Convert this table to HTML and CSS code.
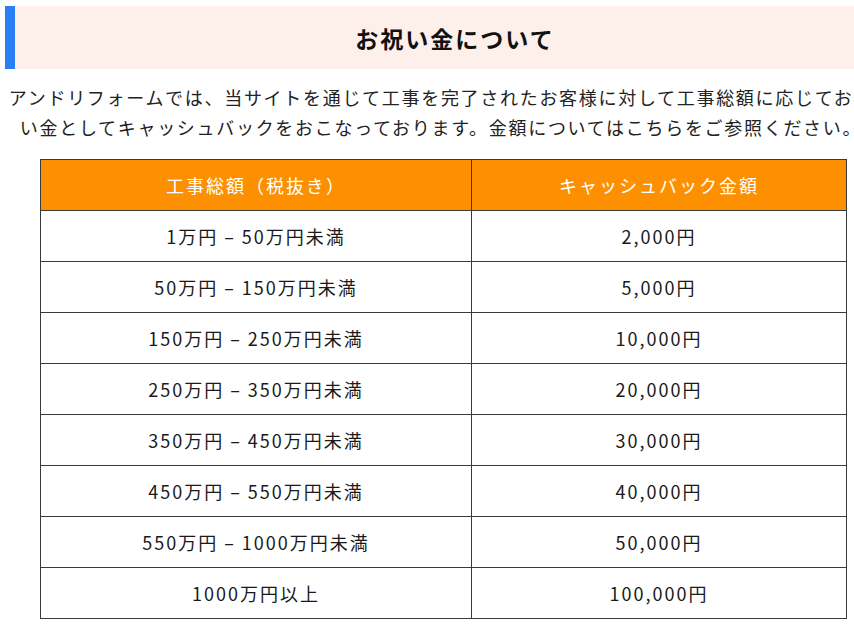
FILE: index.html
```html
<!DOCTYPE html>
<html lang="ja">
<head>
<meta charset="utf-8">
<title>お祝い金について</title>
<link rel="stylesheet" href="styles.css">
</head>
<body>
<div class="page">
  <h2 class="section-title">お祝い金について</h2>
  <p class="intro">アンドリフォームでは、当サイトを通じて工事を完了されたお客様に対して工事総額に応じてお祝い金としてキャッシュバックをおこなっております。金額についてはこちらをご参照ください。</p>
  <table class="cashback">
    <thead>
      <tr><th class="col-a">工事総額（税抜き）</th><th class="col-b">キャッシュバック金額</th></tr>
    </thead>
    <tbody>
      <tr><td>1万円 – 50万円未満</td><td>2,000円</td></tr>
      <tr><td>50万円 – 150万円未満</td><td>5,000円</td></tr>
      <tr><td>150万円 – 250万円未満</td><td>10,000円</td></tr>
      <tr><td>250万円 – 350万円未満</td><td>20,000円</td></tr>
      <tr><td>350万円 – 450万円未満</td><td>30,000円</td></tr>
      <tr><td>450万円 – 550万円未満</td><td>40,000円</td></tr>
      <tr><td>550万円 – 1000万円未満</td><td>50,000円</td></tr>
      <tr><td>1000万円以上</td><td>100,000円</td></tr>
    </tbody>
  </table>
</div>
</body>
</html>
```
FILE: styles.css
```css
html, body {
  margin: 0;
  padding: 0;
  background: #ffffff;
  overflow: hidden;
}

body {
  font-family: "Noto Sans CJK JP", "Noto Sans", sans-serif;
  color: #222222;
  letter-spacing: 2px;
}

.page {
  width: 872px;
  margin-left: 5px;
  padding-top: 6px;
}

.section-title {
  margin: 0;
  height: 63px;
  box-sizing: border-box;
  border-left: 10px solid #2b7ff6;
  background: #fdf0ea;
  padding-left: 18px;
  display: flex;
  align-items: center;
  justify-content: center;
  font-size: 23px;
  font-weight: 700;
  color: #111111;
}

.intro {
  margin: 13px 0 0;
  font-size: 18px;
  line-height: 30px;
  letter-spacing: 1.7px;
  text-align: center;
}

.cashback {
  margin: 17px 0 0 35px;
  width: 807px;
  border-collapse: collapse;
  font-size: 18px;
}

.cashback th,
.cashback td {
  border: 1px solid #3a3a3a;
  height: 51px;
  padding: 0 8px;
  box-sizing: border-box;
  text-align: center;
  vertical-align: middle;
  line-height: 30px;
}

.cashback th {
  background: #fd9000;
  color: #ffffff;
  font-weight: 400;
}

.cashback .col-a {
  width: 431px;
}

.cashback td {
  color: #1a1a1a;
}
```
